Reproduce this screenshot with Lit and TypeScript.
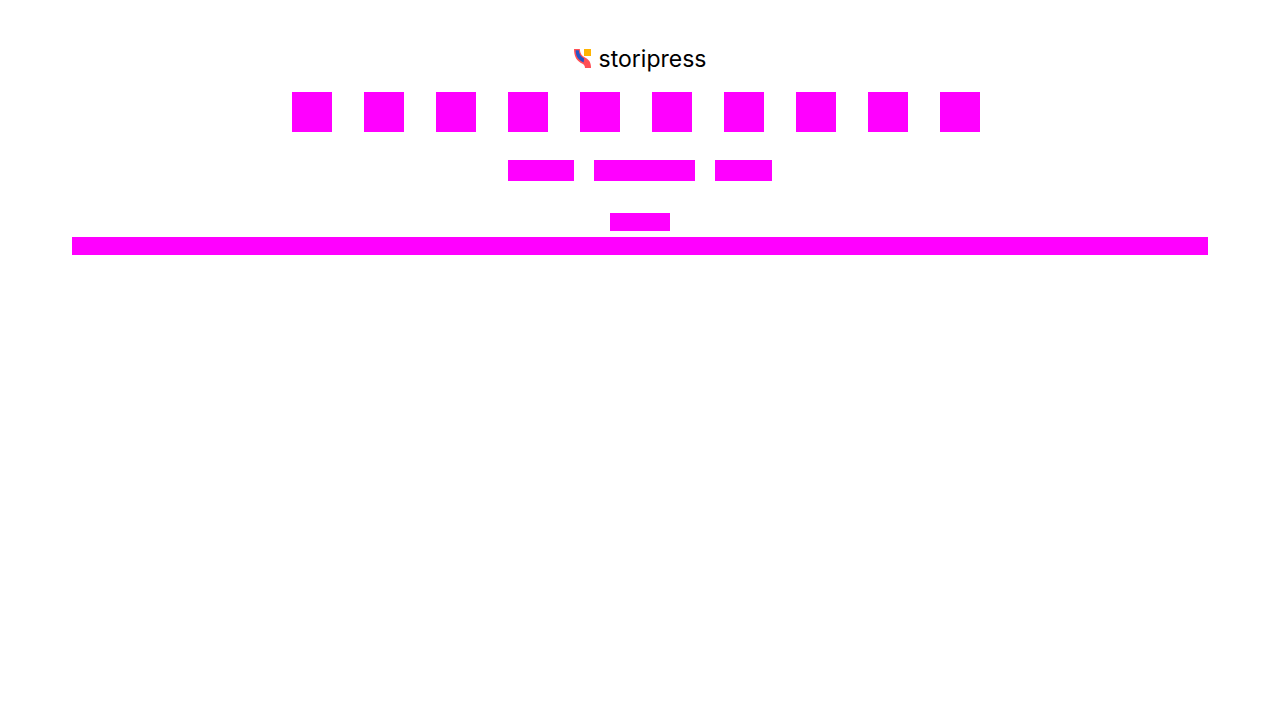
import { LitElement, html, css } from "lit";
import { customElement } from "lit/decorators.js";

@customElement("app-root")
export class AppRoot extends LitElement {
  static styles = css`
    :host {
      display: block;
      background: #fff;
      color: #000;
      font-family: Inter, "Liberation Sans", sans-serif;
    }
    .footer {
      display: flex;
      flex-direction: column;
      align-items: center;
      padding: 45px 72px;
    }
    .brand {
      display: flex;
      align-items: center;
      gap: 7px;
      height: 28px;
      font-size: 23px;
      font-weight: 400;
      line-height: 28px;
      color: inherit;
      text-decoration: none;
    }
    .mark {
      display: block;
      width: 18px;
      height: 20px;
    }
    .socials {
      display: flex;
      justify-content: center;
      margin-top: 19px;
    }
    .social {
      width: 40px;
      height: 40px;
      margin: 0 20px 0 12px;
    }
    .block {
      background: #f0f;
    }
    .links {
      display: flex;
      gap: 20px;
      margin: 28px 0 32px;
    }
    .link {
      height: 21px;
    }
    .short {
      width: 66px;
    }
    .long {
      width: 101px;
    }
    .brief {
      width: 57px;
    }
    .caption {
      width: 60px;
      height: 18px;
      margin-bottom: 6px;
    }
    .note {
      align-self: stretch;
      height: 18px;
    }
  `;

  render() {
    return html`
      <footer class="footer">
        <a class="brand" href="#">
          <svg class="mark" viewBox="0 1 18 20" aria-hidden="true">
            <path fill="#ffb400" d="M10 1h7v7h-7z" />
            <path fill="#ff4f55" d="M0 1h5.800C6 5.500 8 8 11 9.600C15 11.500 17 14.500 17 20h-6C11 17 9.500 16.300 6.500 14.700C2 12 0 7.500 0 1z" />
            <path fill="#2454c6" d="M1.600 2.200h3.200C5 6.300 7 8.700 10.200 10.400L9.600 14.400C4.700 12 1.800 8.900 1.600 2.200z" />
          </svg>
          <span>storipress</span>
        </a>
        <div class="socials">
          ${Array.from({ length: 10 }, () => html`<div class="social block"></div>`)}
        </div>
        <div class="links">
          <div class="link short block"></div>
          <div class="link long block"></div>
          <div class="link brief block"></div>
        </div>
        <div class="caption block"></div>
        <div class="note block"></div>
      </footer>
    `;
  }
}
